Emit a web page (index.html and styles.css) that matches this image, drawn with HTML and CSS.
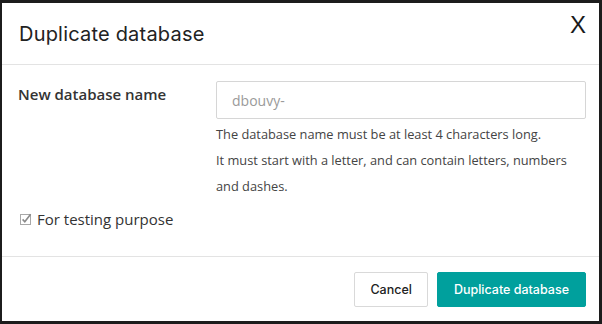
FILE: index.html
```html
<!DOCTYPE html>
<html>
<head>
<meta charset="utf-8">
<title>Duplicate database</title>
<link rel="stylesheet" href="styles.css">
</head>
<body>
<div class="modal">
  <header class="modal-header">
    <h4 class="modal-title">Duplicate database</h4>
    <button class="close" type="button">X</button>
  </header>
  <section class="modal-body">
    <div class="field-row">
      <label class="field-label" for="dbname">New database name</label>
      <div class="field-control">
        <input id="dbname" class="text-input" type="text" placeholder="dbouvy-">
        <p class="help">The database name must be at least 4 characters long.<br>It must start with a letter, and can contain letters, numbers and dashes.</p>
      </div>
    </div>
    <div class="check-row">
      <svg class="check-icon" width="12" height="12" viewBox="0 0 12 12" aria-hidden="true">
        <rect x="0.5" y="1.5" width="10" height="10" fill="#fff" stroke="#a8a8a8" stroke-width="1"/>
        <path d="M2.6 6.4 L4.8 8.7 L10.6 1.2" fill="none" stroke="#8a8a8a" stroke-width="1.6"/>
      </svg>
      <span class="check-label">For testing purpose</span>
    </div>
  </section>
  <footer class="modal-footer">
    <button class="btn btn-secondary" type="button">Cancel</button>
    <button class="btn btn-primary" type="button">Duplicate database</button>
  </footer>
</div>
</body>
</html>
```
FILE: styles.css
```css
* { box-sizing: border-box; }
html, body { margin: 0; }
body {
  background: #1c1c1c;
  padding: 3px 0 0 2px;
  width: 602px;
  height: 324px;
  overflow: hidden;
  font-family: "Open Sans", "Liberation Sans", sans-serif;
  color: #333;
}
.modal {
  width: 597px;
  height: 318px;
  background: #fff;
  display: flex;
  flex-direction: column;
}
.modal-header {
  height: 62px;
  border-bottom: 1px solid #e3e3e3;
  display: flex;
  justify-content: space-between;
  align-items: flex-start;
  padding: 0 13px 0 17px;
}
.modal-title {
  margin: 19px 0 0 0;
  font-family: Inter, "Liberation Sans", sans-serif;
  font-weight: 400;
  font-size: 20px;
  letter-spacing: 0.2px;
  line-height: 24px;
  color: #222;
}
.close {
  margin-top: 8px;
  border: 0;
  background: none;
  padding: 0;
  font-family: "Liberation Sans", Arial, sans-serif;
  font-size: 24px;
  line-height: 28px;
  color: #1a1a1a;
  cursor: pointer;
}
.modal-body {
  flex: 1;
  padding: 16px 13px 0 16px;
}
.field-row {
  display: grid;
  grid-template-columns: 198px 1fr;
}
.field-label {
  padding-top: 3px;
  font-size: 15px;
  font-weight: 600;
  line-height: 20px;
  color: #333;
}
.text-input {
  display: block;
  width: 100%;
  height: 38px;
  border: 1px solid #d6d6d6;
  border-radius: 2px;
  padding: 0 15px;
  font-family: "Open Sans", sans-serif;
  font-size: 14px;
  color: #333;
  outline: none;
}
.text-input::placeholder { color: #9a9a9a; }
.help {
  margin: 2px 0 0 0;
  padding-right: 10px;
  font-size: 12.8px;
  line-height: 26px;
  color: #444;
}
.check-row {
  margin-top: 10px;
  display: flex;
  align-items: center;
  gap: 5px;
  padding-left: 2px;
  height: 20px;
}
.check-icon { display: block; }
.check-label {
  font-size: 15px;
  line-height: 20px;
  color: #333;
}
.modal-footer {
  border-top: 1px solid #e3e3e3;
  display: flex;
  justify-content: flex-end;
  gap: 9px;
  padding: 15px 13px 14px 16px;
}
.btn {
  height: 35px;
  padding: 0 16px;
  border-radius: 2px;
  font-family: Inter, "Liberation Sans", sans-serif;
  font-size: 12.5px;
  font-weight: 500;
  cursor: pointer;
}
.btn-secondary {
  padding: 0 15px;
  background: #fff;
  border: 1px solid #d9d9d9;
  color: #222;
}
.btn-primary {
  background: #00a09d;
  border: 1px solid #00a09d;
  color: #fff;
}
```
